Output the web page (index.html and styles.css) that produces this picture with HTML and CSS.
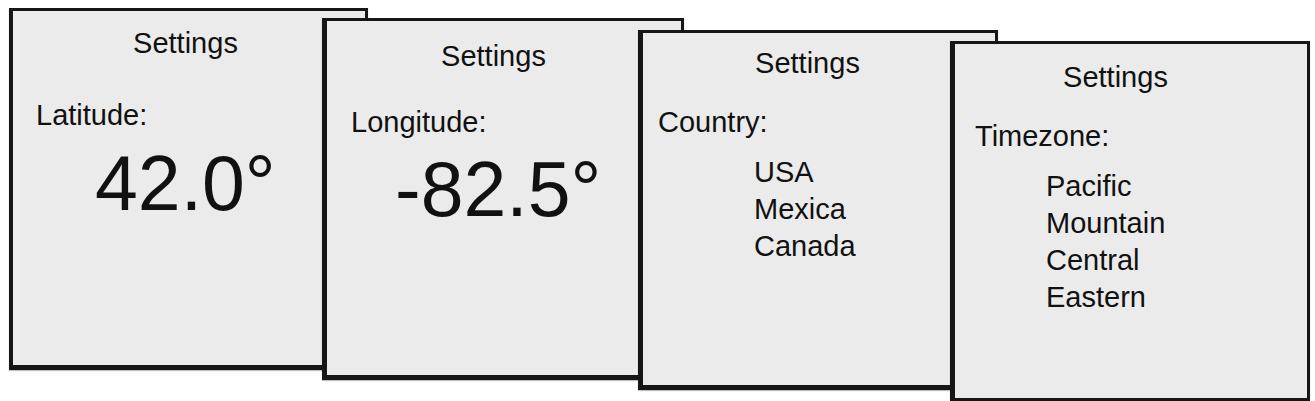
FILE: index.html
```html
<!DOCTYPE html>
<html lang="en">
<head>
<meta charset="utf-8">
<title>Settings screens</title>
<link rel="stylesheet" href="styles.css">
</head>
<body>
<div class="canvas">
  <section class="card card-lat">
    <h2 class="title">Settings</h2>
    <div class="body">
      <div class="label">Latitude:</div>
      <div class="value">42.0°</div>
    </div>
  </section>
  <section class="card card-lon">
    <h2 class="title">Settings</h2>
    <div class="body">
      <div class="label">Longitude:</div>
      <div class="value">-82.5°</div>
    </div>
  </section>
  <section class="card card-country">
    <h2 class="title">Settings</h2>
    <div class="body">
      <div class="label">Country:</div>
      <ul class="list">
        <li>USA</li>
        <li>Mexica</li>
        <li>Canada</li>
      </ul>
    </div>
  </section>
  <section class="card card-tz">
    <h2 class="title">Settings</h2>
    <div class="body">
      <div class="label">Timezone:</div>
      <ul class="list">
        <li>Pacific</li>
        <li>Mountain</li>
        <li>Central</li>
        <li>Eastern</li>
      </ul>
    </div>
  </section>
</div>
</body>
</html>
```
FILE: styles.css
```css
html, body {
  margin: 0;
  padding: 0;
  background: #ffffff;
}

body {
  font-family: "Liberation Sans", Arial, sans-serif;
  color: #111111;
  width: 1315px;
  height: 401px;
  overflow: hidden;
}

.canvas {
  position: relative;
  width: 1315px;
  height: 401px;
}

.card {
  position: absolute;
  box-sizing: border-box;
  background: #ebebeb;
  border: 3px solid #161616;
  border-left-width: 5px;
  border-bottom-width: 5px;
  box-shadow: 0 1px 1px rgba(0, 0, 0, 0.25);
}

.title {
  margin: 0;
  font-size: 29px;
  font-weight: normal;
  line-height: 33px;
  text-align: center;
}

.label {
  font-size: 29px;
  line-height: 33px;
}

.value {
  font-size: 77px;
  line-height: 77px;
}

.list {
  list-style: none;
  margin: 15px 0 0;
  padding: 0;
  font-size: 29px;
  line-height: 37px;
}

/* card 1: latitude */
.card-lat {
  left: 9px;
  top: 8px;
  width: 359px;
  height: 362px;
  border-left-width: 4px;
  z-index: 1;
}
.card-lat .title { padding: 16px 7px 0 0; }
.card-lat .body { padding-left: 23px; }
.card-lat .label { margin-top: 39px; }
.card-lat .value { margin: 13px 0 0 59px; }

/* card 2: longitude */
.card-lon {
  left: 322px;
  top: 18px;
  width: 362px;
  height: 362px;
  z-index: 2;
}
.card-lon .title { padding: 19px 21px 0 0; }
.card-lon .body { padding-left: 24px; }
.card-lon .label { margin-top: 33px; }
.card-lon .value { margin: 12px 0 0 44px; }

/* card 3: country */
.card-country {
  left: 638px;
  top: 30px;
  width: 360px;
  height: 360px;
  z-index: 3;
}
.card-country .title { padding: 14px 23px 0 0; }
.card-country .body { padding-left: 15px; }
.card-country .label { margin-top: 26px; }
.card-country .list { margin-left: 96px; }

/* card 4: timezone */
.card-tz {
  left: 950px;
  top: 41px;
  width: 360px;
  height: 362px;
  z-index: 4;
}
.card-tz .title { padding: 17px 31px 0 0; }
.card-tz .body { padding-left: 20px; }
.card-tz .label { margin-top: 26px; }
.card-tz .list { margin-left: 71px; }
```
